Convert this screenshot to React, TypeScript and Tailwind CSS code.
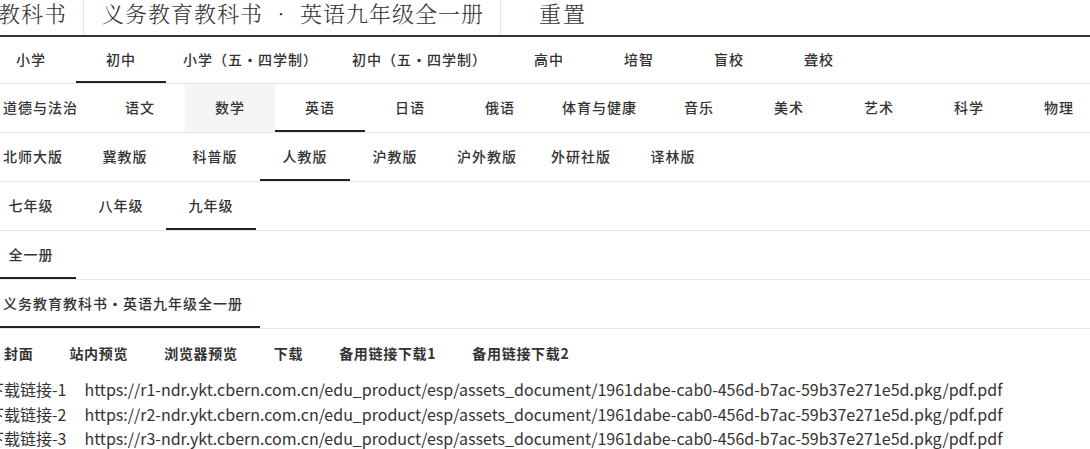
import React from "react";

const sans = "font-['Noto_Sans_CJK_SC','Noto_Sans',sans-serif]";

type RowProps = { items: string[]; active?: string; hover?: string; h?: string };

function TabRow({ items, active, hover, h = "h-[49px]" }: RowProps) {
  return (
    <div className={`flex ${h} border-b border-[#e8e8e8]`}>
      {items.map((t) => (
        <div
          key={t}
          className={`flex min-w-[90px] shrink-0 items-center justify-center border-b-2 px-[17px] text-[14px] font-medium tracking-[1px] text-[#333] ${
            t === active ? "border-[#222]" : "border-transparent"
          } ${t === hover ? "bg-[#f5f5f5]" : ""}`}
        >
          {t}
        </div>
      ))}
    </div>
  );
}

const url = (n: number) =>
  `https://r${n}-ndr.ykt.cbern.com.cn/edu_product/esp/assets_document/1961dabe-cab0-456d-b7ac-59b37e271e5d.pkg/pdf.pdf`;

export default function App() {
  return (
    <div className={`h-[449px] w-[1090px] overflow-hidden bg-white ${sans}`}>
      <div className="-ml-[14px] w-[1104px]">
        {/* header */}
        <div className="flex h-[37px] border-b-2 border-[#333] font-['Noto_Serif_CJK_SC','Noto_Serif_SC','AR_PL_UMing_CN',serif] text-[22px] font-light leading-[26px] tracking-[1px] text-[#333]">
          <div className="flex items-start border-r border-[#e0e0e0] pl-[12px] pr-[16px]">教科书</div>
          <div className="flex items-start border-r border-[#e0e0e0] pl-[18px] pr-[16px]">
            义务教育教科书<span className="mx-[7px]">•</span>英语九年级全一册
          </div>
          <div className="flex items-start pl-[38px] tracking-[2px]">重置</div>
        </div>
        <TabRow
          h="h-[47px]"
          items={["小学", "初中", "小学（五·四学制）", "初中（五·四学制）", "高中", "培智", "盲校", "聋校"]}
          active="初中"
        />
        <TabRow
          items={["道德与法治", "语文", "数学", "英语", "日语", "俄语", "体育与健康", "音乐", "美术", "艺术", "科学", "物理"]}
          active="英语"
          hover="数学"
        />
        <TabRow
          items={["北师大版", "冀教版", "科普版", "人教版", "沪教版", "沪外教版", "外研社版", "译林版"]}
          active="人教版"
        />
        <TabRow items={["七年级", "八年级", "九年级"]} active="九年级" />
        <TabRow items={["全一册"]} active="全一册" />
        <TabRow items={["义务教育教科书·英语九年级全一册"]} active="义务教育教科书·英语九年级全一册" />
        {/* links */}
        <div className="flex h-[48px] items-center">
          {["封面", "站内预览", "浏览器预览", "下载", "备用链接下载1", "备用链接下载2"].map((t) => (
            <div key={t} className="shrink-0 px-[18px] text-[14px] font-semibold tracking-[0.7px] text-[#333]">
              {t}
            </div>
          ))}
        </div>
        {/* download lines */}
        <div className="ml-[2px] text-[16px] leading-[24.5px] text-[#333]">
          {[1, 2, 3].map((n) => (
            <div key={n} className="flex whitespace-nowrap">
              <span>下载链接-{n}</span>
              <span className="ml-[18px]">{url(n)}</span>
            </div>
          ))}
        </div>
      </div>
    </div>
  );
}
